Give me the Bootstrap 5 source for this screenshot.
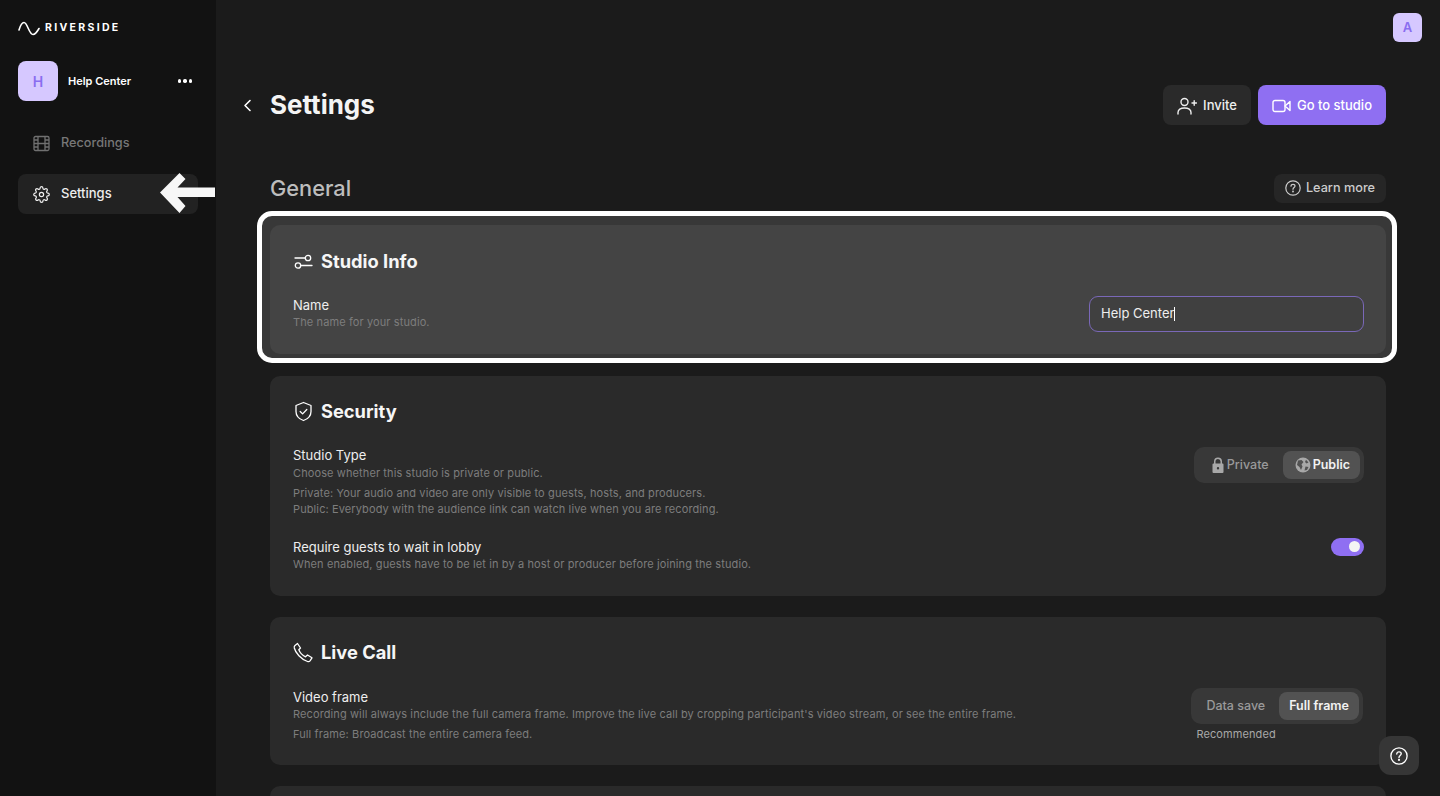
<!DOCTYPE html>
<html lang="en">
<head>
<meta charset="utf-8">
<title>Riverside Settings</title>
<link href="https://cdn.jsdelivr.net/npm/bootstrap@5.3.0/dist/css/bootstrap.min.css" rel="stylesheet">
<style>
html,body{height:796px;overflow:hidden}
body{font-family:Inter,"Liberation Sans",sans-serif;background:#1b1b1b;color:#fff;font-size:13px}
svg{display:block;flex:none}
.rail{width:216px;height:796px;background:#121212;padding:0 18px;flex:none}
.logo-row{height:54px;padding-top:2px}
.logo-word{font-size:10.5px;font-weight:700;letter-spacing:2.3px;margin-left:5px}
.tile{background:#d6c8ff;color:#8a6df0;font-weight:600;display:flex;align-items:center;justify-content:center}
.tile-lg{width:40px;height:40px;border-radius:8px;font-size:14px}
.tile-sm{width:29px;height:29px;border-radius:6px;font-size:13px}
.team-row{margin-top:7px;height:40px}
.team-name{font-size:11px;font-weight:600;margin-left:10px;flex-grow:1}
.dots{display:flex;gap:2px;margin-right:6px}
.dots i{width:3.4px;height:3.4px;border-radius:50%;background:#fff}
.rail-link{height:40px;border-radius:8px;padding-left:15px;gap:11px;font-size:13px;font-weight:500;color:#777}
.rail-link.on{background:#222;color:#eee}
.rail-first{margin-top:22px;margin-bottom:11px;font-size:12.7px}
.pointer{position:absolute;left:159px;top:172px}
.pane{flex-grow:1;padding:0 54px;position:relative;z-index:0;height:796px;overflow:hidden;background:#1b1b1b}
.topbar{height:42px;padding-top:13px;margin-right:-36px}
.head-row{margin-top:43px;height:40px}
.back{width:27px;margin-left:-27px}
.page-title{font-size:26px;font-weight:700;margin:0;line-height:40px;color:#f4f4f4}
.act{height:40px;border-radius:8px;border:0;font-size:13px;font-weight:500;color:#eee;padding:1px 14px 0;gap:6px;display:flex;align-items:center}
.act-dark{background:#2a2a2a;margin-right:7px}
.act-purple{background:#8f6ff2;color:#fff}
.sect-row{margin-top:48px;height:30px;margin-bottom:22px}
.sect-title{font-size:21.8px;font-weight:500;color:#bdbdbd;margin:0}
.learn{height:29px;border-radius:8px;background:#262626;color:#ccc;font-size:12.7px;font-weight:500;padding:0 11px;gap:5px;display:flex;align-items:center;border:0}
.panel{background:#2a2a2a;border-radius:10px;padding:24px 22px 23px 23px;margin-bottom:21px;position:relative}
.panel-hi{background:#444;height:129px;margin-bottom:22px}
.panel-hi::before{content:"";position:absolute;z-index:-1;inset:-14px -11px -9px -13px;background:#383838;border:5px solid #fff;border-radius:15px}
.panel-sec{height:220px}
.panel-live{height:148px}
.panel-h{font-size:18.3px;font-weight:700;gap:7px;margin:-1px 0 0;line-height:26px;color:#f6f6f6}
.opt-name{font-size:13px;line-height:16px;color:#eee}
.opt-note{font-size:11px;line-height:16.500px;color:#7d7d7d;letter-spacing:.11px;margin-top:1px}
.name-field{width:275px;height:36px;background:#404040;border:1px solid #7a68b8;border-radius:9px;padding-left:11px;font-size:13px;color:#eee;display:flex;align-items:center}
.caret-bar{width:1px;height:14px;background:#fff}
.seg{background:#383838;border-radius:10px;padding:4px;height:36px}
.seg-item{border-radius:8px;height:28px;font-weight:500;font-size:12.5px;display:flex;align-items:center;color:#9a9a9a;gap:2px}
.seg-item.on{background:#525252;color:#f2f2f2;font-weight:600}
.switch-pill{width:33px;height:18px;border-radius:9px;background:#8f6ff2;position:relative;margin-top:-1px}
.switch-pill::after{content:"";position:absolute;right:4px;top:3.500px;width:11px;height:11px;border-radius:50%;background:#f4f4f4}
.rec-note{font-size:11px;letter-spacing:.1px;color:#a8a8a8;line-height:14px;margin-top:3px;margin-left:5px}
.help-fab{position:absolute;right:21px;top:736px;width:40px;height:39px;border-radius:12px;background:#363636;display:flex;align-items:center;justify-content:center}
</style>
</head>
<body class="d-flex">
<aside class="rail position-relative">
  <div class="logo-row d-flex align-items-center">
    <svg width="22" height="15" viewBox="0 0 22 15" fill="none" stroke="#fff" stroke-width="1.600" stroke-linecap="round"><path d="M1 9C2.500 4 4 1.500 6 1.500c3.500 0 5 12 9 12 2.500 0 4-2.500 6-6"/></svg>
    <span class="logo-word">RIVERSIDE</span>
  </div>
  <div class="team-row d-flex align-items-center">
    <div class="tile tile-lg">H</div>
    <span class="team-name">Help Center</span>
    <span class="dots"><i></i><i></i><i></i></span>
  </div>
  <div class="rail-link rail-first d-flex align-items-center">
    <svg width="17" height="17" viewBox="0 0 17 17" fill="none" stroke="#707070" stroke-width="1.300"><rect x="1" y="1.500" width="15" height="14" rx="1.500"/><path d="M5 1.500v14M12 1.500v14M1 8.500h15M1 5h4M1 12h4M12 5h4M12 12h4"/></svg>
    <span>Recordings</span>
  </div>
  <div class="rail-link on d-flex align-items-center">
    <svg width="17" height="17" viewBox="0 0 24 24" fill="none" stroke="#eee" stroke-width="1.700" stroke-linecap="round" stroke-linejoin="round"><path d="M12 15a3 3 0 1 0 0-6 3 3 0 0 0 0 6z"/><path d="M19.400 15a1.650 1.650 0 0 0 .33 1.820l.06.06a2 2 0 0 1 0 2.830 2 2 0 0 1-2.830 0l-.06-.06a1.650 1.650 0 0 0-1.820-.33 1.650 1.650 0 0 0-1 1.510V21a2 2 0 0 1-2 2 2 2 0 0 1-2-2v-.09A1.650 1.650 0 0 0 9 19.400a1.650 1.650 0 0 0-1.820.33l-.06.06a2 2 0 0 1-2.830 0 2 2 0 0 1 0-2.830l.06-.06a1.650 1.650 0 0 0 .33-1.820 1.650 1.650 0 0 0-1.510-1H3a2 2 0 0 1-2-2 2 2 0 0 1 2-2h.09A1.650 1.650 0 0 0 4.600 9a1.650 1.650 0 0 0-.33-1.820l-.06-.06a2 2 0 0 1 0-2.830 2 2 0 0 1 2.830 0l.06.06a1.650 1.650 0 0 0 1.820.33H9a1.650 1.650 0 0 0 1-1.510V3a2 2 0 0 1 2-2 2 2 0 0 1 2 2v.09a1.650 1.650 0 0 0 1 1.510 1.650 1.650 0 0 0 1.820-.33l.06-.06a2 2 0 0 1 2.830 0 2 2 0 0 1 0 2.830l-.06.06a1.650 1.650 0 0 0-.33 1.820V9a1.650 1.650 0 0 0 1.510 1H21a2 2 0 0 1 2 2 2 2 0 0 1-2 2h-.09a1.650 1.650 0 0 0-1.510 1z"/></svg>
    <span>Settings</span>
  </div>
  <svg class="pointer" width="56" height="42" viewBox="0 0 56 42" fill="#f7f7f7"><path d="M20.500 1 26.500 7 18.500 15.500H56V25H18.500L26.500 34 20.500 41 1 20.500z"/></svg>
</aside>
<main class="pane">
  <div class="topbar d-flex justify-content-end"><div class="tile tile-sm">A</div></div>
  <div class="head-row d-flex align-items-center">
    <div class="back"><svg width="9" height="13" viewBox="0 0 9 13" fill="none" stroke="#fff" stroke-width="1.600" stroke-linecap="round" stroke-linejoin="round"><path d="M7 1.500 2 6.500l5 5"/></svg></div>
    <h1 class="page-title flex-grow-1">Settings</h1>
    <button class="act act-dark" type="button">
      <svg width="20" height="18" viewBox="0 0 20 18" fill="none" stroke="#eee" stroke-width="1.400" stroke-linecap="round"><circle cx="7.500" cy="5" r="3.500"/><path d="M1 17v-1.500C1 12.500 3.500 11 7.500 11s6.500 1.500 6.500 4.500V17M15 6h4.500M17.200 3.800v4.400"/></svg>
      Invite
    </button>
    <button class="act act-purple" type="button">
      <svg width="19" height="14" viewBox="0 0 19 14" fill="none" stroke="#fff" stroke-width="1.400" stroke-linejoin="round"><rect x="1" y="1.500" width="12" height="11" rx="2"/><path d="M13 7 18 2.500v9z"/></svg>
      Go to studio
    </button>
  </div>
  <div class="sect-row d-flex align-items-center justify-content-between">
    <h2 class="sect-title">General</h2>
    <button class="learn" type="button">
      <svg width="16" height="16" viewBox="0 0 16 16" fill="none" stroke="#ccc" stroke-width="1.200" stroke-linecap="round"><circle cx="8" cy="8" r="7.200"/><path d="M6 6.200C6 5 6.900 4.300 8 4.300S10 5 10 6.100C10 7.600 8 7.600 8 9.300"/><circle cx="8" cy="11.500" r=".4"/></svg>
      Learn more
    </button>
  </div>

  <section class="panel panel-hi">
    <h3 class="panel-h d-flex align-items-center">
      <svg width="21" height="15" viewBox="0 0 21 15" fill="none" stroke="#fff" stroke-width="1.300"><path d="M2 4h10M8 11.500h11" stroke-linecap="round"/><circle cx="15" cy="4" r="2.700"/><circle cx="5" cy="11.500" r="2.700"/></svg>
      Studio Info
    </h3>
    <div class="d-flex justify-content-between align-items-start" style="margin-top:22px">
      <div style="margin-top:1px">
        <div class="opt-name">Name</div>
        <div class="opt-note">The name for your studio.</div>
      </div>
      <div class="name-field"><span>Help Center</span><span class="caret-bar"></span></div>
    </div>
  </section>

  <section class="panel panel-sec">
    <h3 class="panel-h d-flex align-items-center" style="margin-top:-2px">
      <svg width="21" height="21" viewBox="0 0 21 21" fill="none" stroke="#fff" stroke-width="1.300" stroke-linejoin="round"><path d="M10.500 1.500 18 4.500v6c0 4.500-3.200 7.500-7.500 9-4.300-1.500-7.500-4.500-7.500-9v-6z"/><path d="m7.200 10.500 2.400 2.400 4.200-4.400" stroke-linecap="round"/></svg>
      Security
    </h3>
    <div class="d-flex justify-content-between align-items-start" style="margin-top:23px">
      <div>
        <div class="opt-name">Studio Type</div>
        <div class="opt-note" style="margin-top:2px">Choose whether this studio is private or public.</div>
        <div class="opt-note" style="margin-top:3px">Private: Your audio and video are only visible to guests, hosts, and producers.</div>
        <div class="opt-note" style="margin-top:0">Public: Everybody with the audience link can watch live when you are recording.</div>
      </div>
      <div class="seg d-flex">
        <div class="seg-item" style="padding:0 14px 0 13px">
          <svg width="14" height="16" viewBox="0 0 14 16" fill="#a8a8a8"><path d="M3 7V4.500a4 4 0 0 1 8 0V7H9.500V4.500a2.500 2.500 0 0 0-5 0V7z"/><path fill-rule="evenodd" d="M2.500 6.500h9a1 1 0 0 1 1 1V15a1 1 0 0 1-1 1h-9a1 1 0 0 1-1-1V7.500a1 1 0 0 1 1-1zM7 10a1.200 1.200 0 1 0 0 2.400A1.200 1.200 0 0 0 7 10z"/></svg>
          Private
        </div>
        <div class="seg-item on" style="padding:0 10px 0 12px">
          <svg width="16" height="16" viewBox="0 0 16 16"><circle cx="8" cy="8" r="7.500" fill="#a8a8a8"/><path fill="#525252" d="M3 3.500 6.500 3 8.500 5 6.500 7.500 7.500 9.500 6 13 4.500 10 2 8zM11 2.800 13.500 5.500 11.500 6.500 10 5zM10.500 9.500l3 .5-1.500 3-2.500.5z"/></svg>
          Public
        </div>
      </div>
    </div>
    <div class="d-flex justify-content-between align-items-start" style="margin-top:21px">
      <div>
        <div class="opt-name">Require guests to wait in lobby</div>
        <div class="opt-note">When enabled, guests have to be let in by a host or producer before joining the studio.</div>
      </div>
      <div class="switch-pill"></div>
    </div>
  </section>

  <section class="panel panel-live">
    <h3 class="panel-h d-flex align-items-center" style="margin-top:-2px">
      <svg width="21" height="21" viewBox="0 0 21 21" fill="none" stroke="#fff" stroke-width="1.300" stroke-linejoin="round"><path d="M2 3.500 4.500 1.500l3 4.500-1.700 1.800c1 2.500 3.500 5.500 6.700 7l2-1.800 4.500 2.800-2 3c-.5.700-1.500 1-2.500.7C8 17 2.500 11 1.300 6c-.2-1 .1-2 .7-2.500z"/></svg>
      Live Call
    </h3>
    <div class="d-flex justify-content-between align-items-start" style="margin-top:24px">
      <div>
        <div class="opt-name">Video frame</div>
        <div class="opt-note">Recording will always include the full camera frame. Improve the live call by cropping participant's video stream, or see the entire frame.</div>
        <div class="opt-note" style="margin-top:3px">Full frame: Broadcast the entire camera feed.</div>
      </div>
      <div style="margin-top:-1px;margin-right:1px">
        <div class="seg d-flex">
          <div class="seg-item" style="padding:0 14px 0 11px">Data save</div>
          <div class="seg-item on" style="padding:0 10px">Full frame</div>
        </div>
        <div class="rec-note">Recommended</div>
      </div>
    </div>
  </section>
  <section class="panel" style="height:120px"></section>
  <div class="help-fab">
    <svg width="18" height="18" viewBox="0 0 16 16" fill="none" stroke="#fff" stroke-width="1.200" stroke-linecap="round"><circle cx="8" cy="8" r="7.200"/><path d="M6 6.200C6 5 6.900 4.300 8 4.300S10 5 10 6.100C10 7.600 8 7.600 8 9.300"/><circle cx="8" cy="11.500" r=".4"/></svg>
  </div>
</main>
<script src="https://cdn.jsdelivr.net/npm/bootstrap@5.3.0/dist/js/bootstrap.bundle.min.js"></script>
</body>
</html>
